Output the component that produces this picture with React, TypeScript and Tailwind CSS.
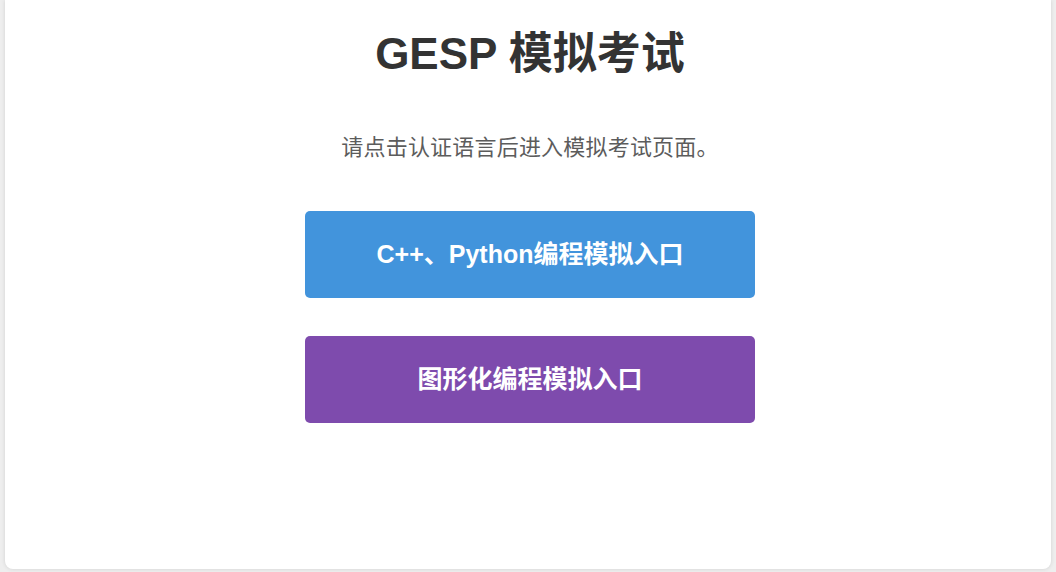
export default function App() {
  const font = { fontFamily: '"Liberation Sans", "Noto Sans CJK SC", sans-serif' };

  return (
    <div className="h-[572px] overflow-hidden bg-[#eeeeee] px-[5px] pb-[3px]" style={font}>
      <div className="flex h-full flex-col items-center rounded-b-lg bg-white pl-[4px] pt-[27px] shadow-[0_0_4px_rgba(0,0,0,0.12)]">
        <h1 className="text-[44px] font-bold leading-[53px] text-[#333333]">GESP 模拟考试</h1>
        <p className="mt-[51px] text-[22px] tracking-[0.2px] leading-[33px] text-[#5c5c5c]">请点击认证语言后进入模拟考试页面。</p>

        <div className="mt-[47px] flex flex-col gap-[38px]">
          <button className="flex h-[87px] w-[450px] items-center justify-center rounded-[5px] bg-[#4294dc] text-[25px] font-bold text-white">
            C++、Python编程模拟入口
          </button>
          <button className="flex h-[87px] w-[450px] items-center justify-center rounded-[5px] bg-[#7e4bad] text-[25px] font-bold text-white">
            图形化编程模拟入口
          </button>
        </div>
      </div>
    </div>
  );
}
